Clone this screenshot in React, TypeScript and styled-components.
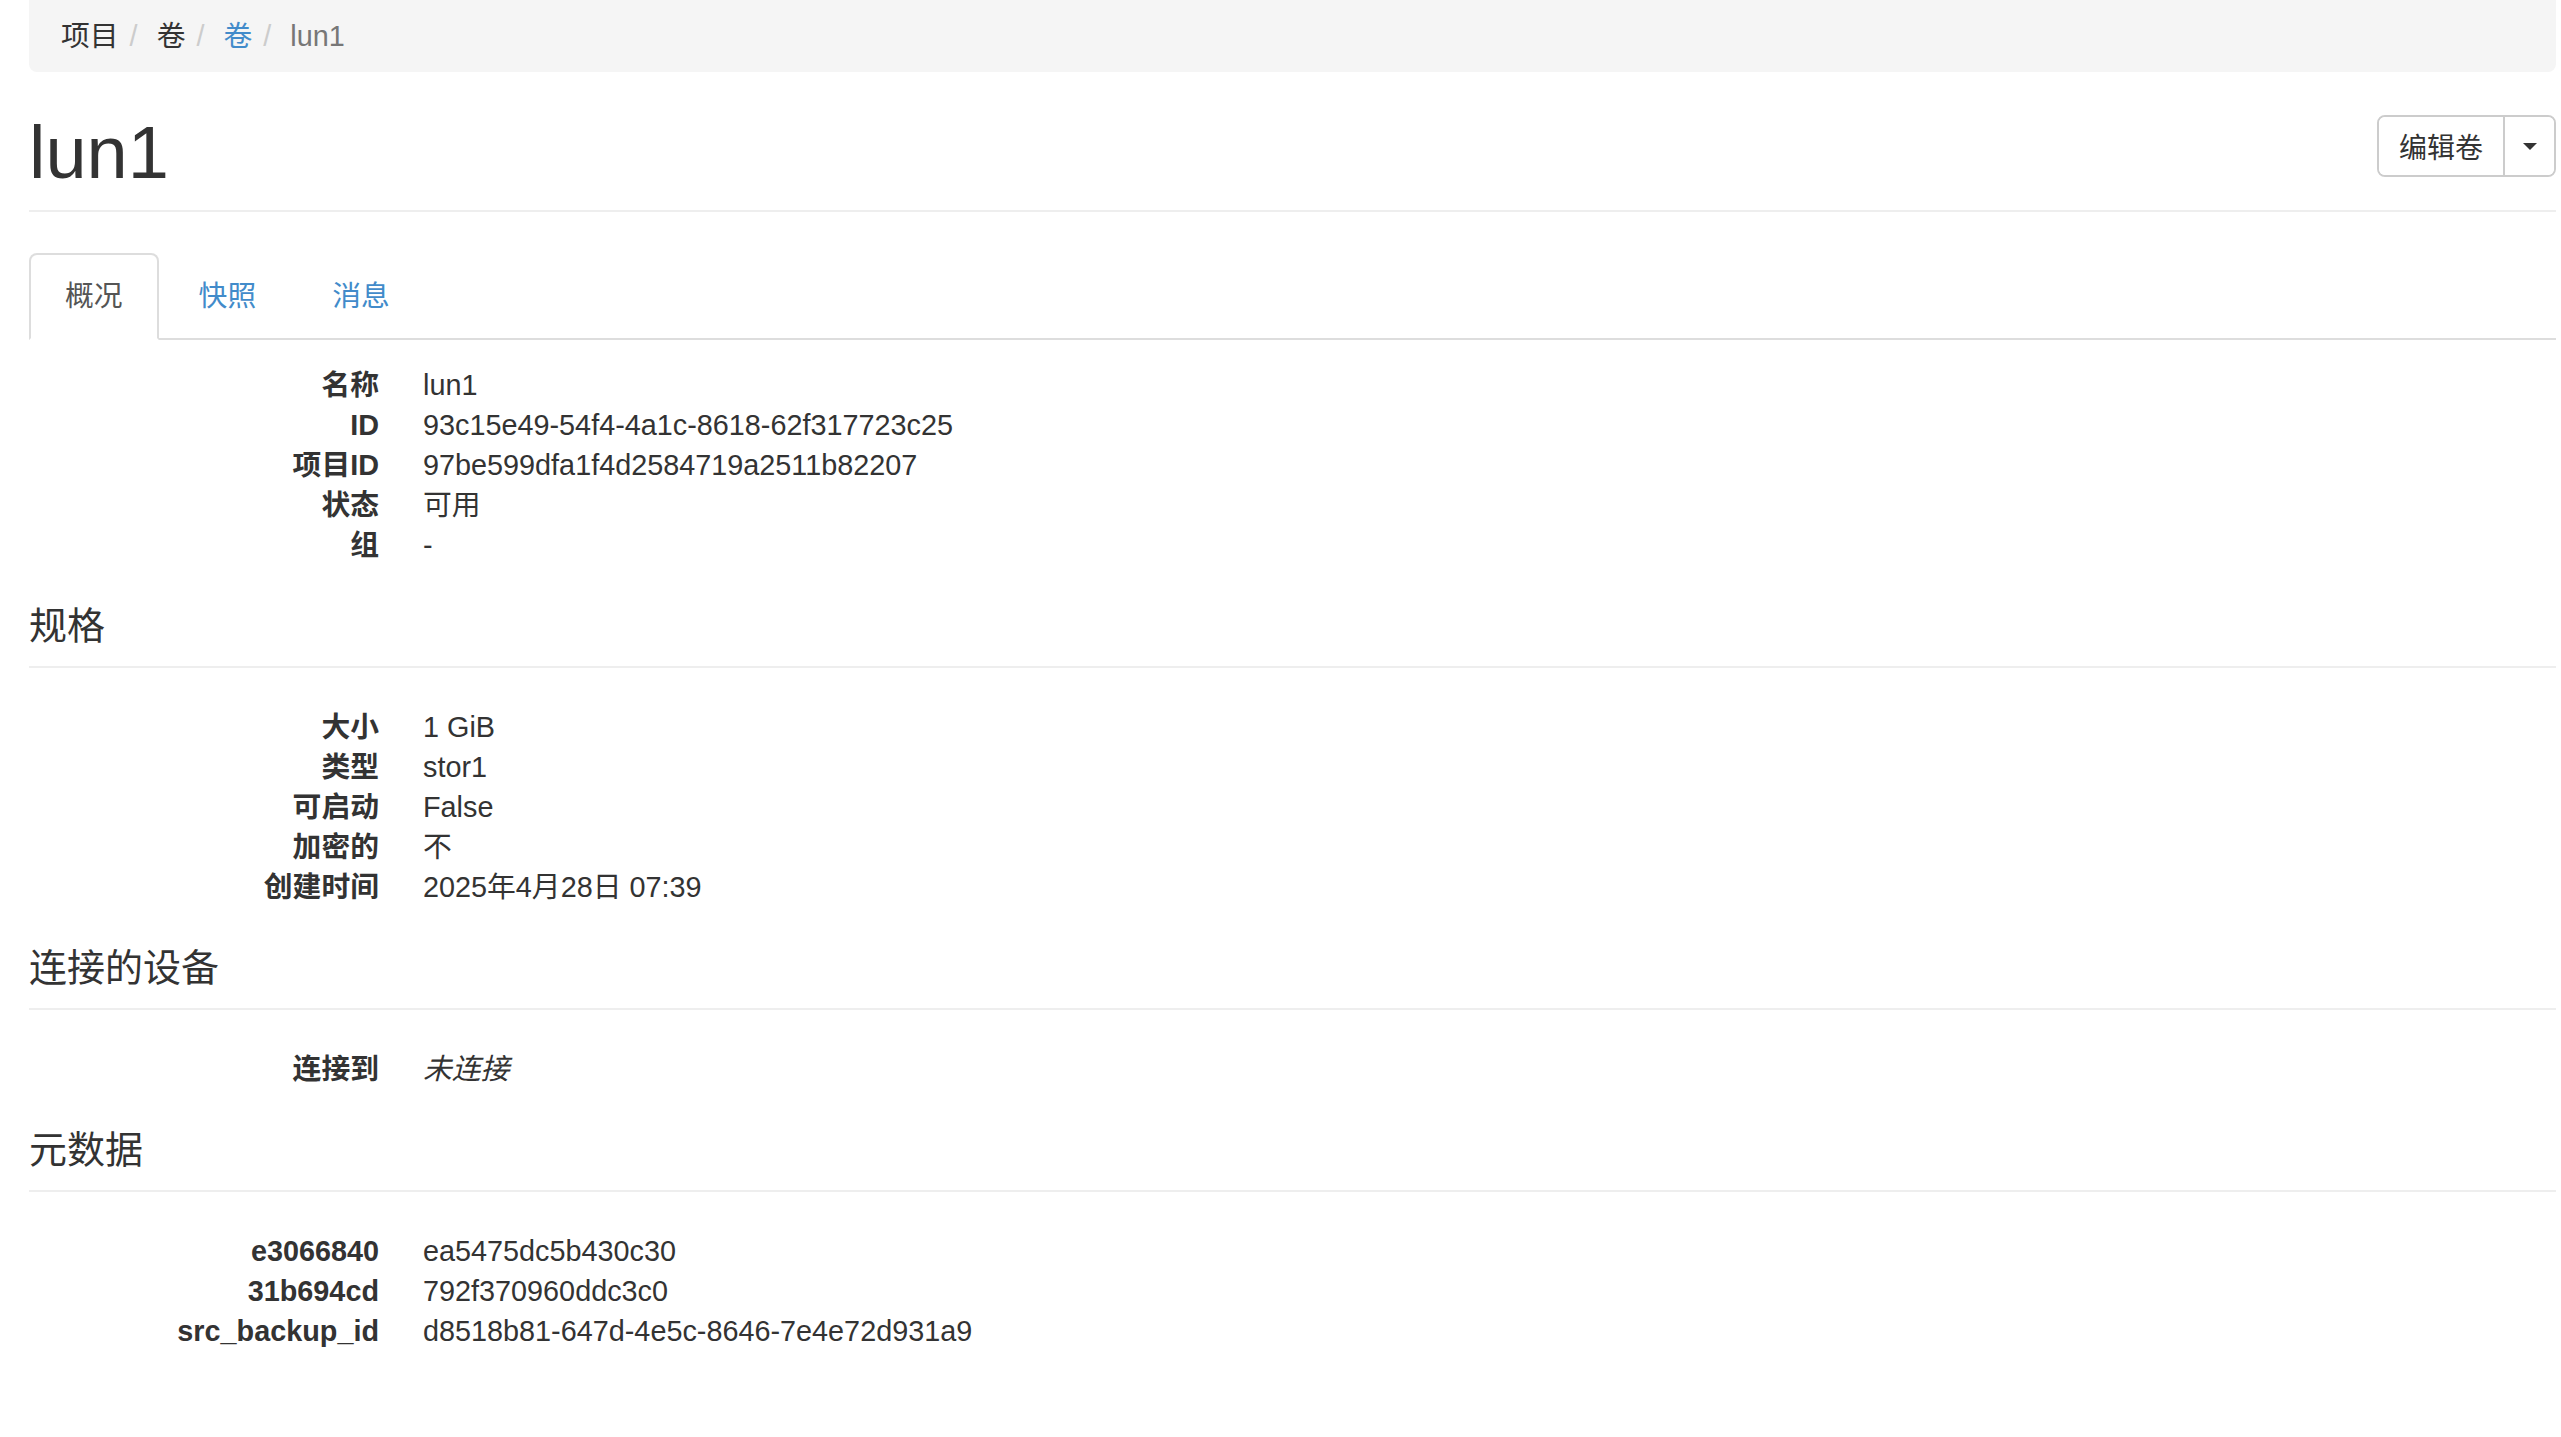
import React from "react";
import styled, { createGlobalStyle } from "styled-components";

const GlobalStyle = createGlobalStyle`
  html, body {
    margin: 0;
    padding: 0;
    background: #fff;
  }
  body {
    font-family: "Liberation Sans", "Noto Sans CJK SC", sans-serif;
    font-size: 28.8px;
    color: #333;
  }
  * { box-sizing: border-box; }
`;

const Page = styled.div`
  padding: 0 5px 60px 29px;
  display: flex;
  flex-direction: column;
`;

const Breadcrumb = styled.ol`
  list-style: none;
  margin: 0;
  height: 72px;
  padding: 0 32px;
  display: flex;
  align-items: center;
  background: #f5f5f5;
  border-radius: 0 0 8px 8px;
  line-height: 40px;
`;

const Crumb = styled.li<{ $tone: "dark" | "link" | "active" }>`
  color: ${(p) => (p.$tone === "link" ? "#428bca" : p.$tone === "active" ? "#777" : "#333")};
`;

const CrumbSep = styled.span`
  color: #ccc;
  margin: 0 19px 0 11px;
`;

const PageHeader = styled.div`
  margin-top: 37px;
  padding-bottom: 13px;
  border-bottom: 2px solid #eee;
  display: flex;
  align-items: flex-start;
  justify-content: space-between;
`;

const Title = styled.h1`
  margin: 0;
  font-size: 74px;
  line-height: 88px;
  font-weight: 400;
  color: #333;
`;

const BtnGroup = styled.div`
  margin-top: 6px;
  display: flex;
  height: 62px;
  border: 2px solid #ccc;
  border-radius: 8px;
  background: #fff;
  overflow: hidden;
`;

const Btn = styled.button`
  font-family: inherit;
  font-size: 28px;
  color: #333;
  background: #fff;
  border: none;
  margin: 0;
  padding: 0 20px;
  display: flex;
  align-items: center;
  justify-content: center;
  cursor: pointer;
`;

const CaretBtn = styled(Btn)`
  width: 51px;
  padding: 0;
  border-left: 2px solid #ccc;
`;

const Caret = styled.span`
  width: 0;
  height: 0;
  border-top: 7px solid #333;
  border-left: 7px solid transparent;
  border-right: 7px solid transparent;
`;

const Tabs = styled.ul`
  list-style: none;
  margin: 41px 0 0;
  padding: 0;
  display: flex;
  border-bottom: 2px solid #ddd;
`;

const Tab = styled.li<{ $active?: boolean }>`
  margin-right: 4px;
  margin-bottom: -2px;
  padding: 21px 34px 22px;
  line-height: 40px;
  border: 2px solid ${(p) => (p.$active ? "#ddd" : "transparent")};
  border-bottom-color: transparent;
  border-radius: 8px 8px 0 0;
  background: ${(p) => (p.$active ? "#fff" : "transparent")};
  color: ${(p) => (p.$active ? "#555" : "#428bca")};
  cursor: pointer;
`;

const DL = styled.dl<{ $top: number }>`
  margin: ${(p) => p.$top}px 0 0;
  display: grid;
  grid-template-columns: 350px 1fr;
  column-gap: 44px;
  line-height: 40px;
`;

const DT = styled.dt`
  font-weight: 700;
  text-align: right;
  white-space: nowrap;
  overflow: hidden;
  text-overflow: ellipsis;
`;

const DD = styled.dd<{ $italic?: boolean }>`
  margin: 0;
  font-style: ${(p) => (p.$italic ? "italic" : "normal")};
  white-space: nowrap;
`;

const SectionTitle = styled.h4`
  margin: 39px 0 0;
  font-size: 38px;
  line-height: 44px;
  font-weight: 400;
  color: #333;
`;

const Divider = styled.hr`
  margin: 18px 0 0;
  height: 2px;
  border: none;
  background: #eee;
`;

type Row = { label: string; value: string; italic?: boolean };

const DetailList: React.FC<{ rows: Row[]; top: number }> = ({ rows, top }) => (
  <DL $top={top}>
    {rows.map((r) => (
      <React.Fragment key={r.label}>
        <DT>{r.label}</DT>
        <DD $italic={r.italic}>{r.value}</DD>
      </React.Fragment>
    ))}
  </DL>
);

const Section: React.FC<{ title: string; rows: Row[] }> = ({ title, rows }) => (
  <>
    <SectionTitle>{title}</SectionTitle>
    <Divider />
    <DetailList rows={rows} top={39} />
  </>
);

const overview: Row[] = [
  { label: "名称", value: "lun1" },
  { label: "ID", value: "93c15e49-54f4-4a1c-8618-62f317723c25" },
  { label: "项目ID", value: "97be599dfa1f4d2584719a2511b82207" },
  { label: "状态", value: "可用" },
  { label: "组", value: "-" },
];

const specs: Row[] = [
  { label: "大小", value: "1 GiB" },
  { label: "类型", value: "stor1" },
  { label: "可启动", value: "False" },
  { label: "加密的", value: "不" },
  { label: "创建时间", value: "2025年4月28日 07:39" },
];

const attachments: Row[] = [{ label: "连接到", value: "未连接", italic: true }];

const metadata: Row[] = [
  { label: "e3066840", value: "ea5475dc5b430c30" },
  { label: "31b694cd", value: "792f370960ddc3c0" },
  { label: "src_backup_id", value: "d8518b81-647d-4e5c-8646-7e4e72d931a9" },
];

export default function App() {
  return (
    <>
      <GlobalStyle />
      <Page>
        <Breadcrumb>
          <Crumb $tone="dark">项目</Crumb>
          <CrumbSep>/</CrumbSep>
          <Crumb $tone="dark">卷</Crumb>
          <CrumbSep>/</CrumbSep>
          <Crumb $tone="link">卷</Crumb>
          <CrumbSep>/</CrumbSep>
          <Crumb $tone="active">lun1</Crumb>
        </Breadcrumb>

        <PageHeader>
          <Title>lun1</Title>
          <BtnGroup>
            <Btn>编辑卷</Btn>
            <CaretBtn aria-label="more">
              <Caret />
            </CaretBtn>
          </BtnGroup>
        </PageHeader>

        <Tabs>
          <Tab $active>概况</Tab>
          <Tab>快照</Tab>
          <Tab>消息</Tab>
        </Tabs>

        <DetailList rows={overview} top={25} />
        <Section title="规格" rows={specs} />
        <Section title="连接的设备" rows={attachments} />
        <Section title="元数据" rows={metadata} />
      </Page>
    </>
  );
}
